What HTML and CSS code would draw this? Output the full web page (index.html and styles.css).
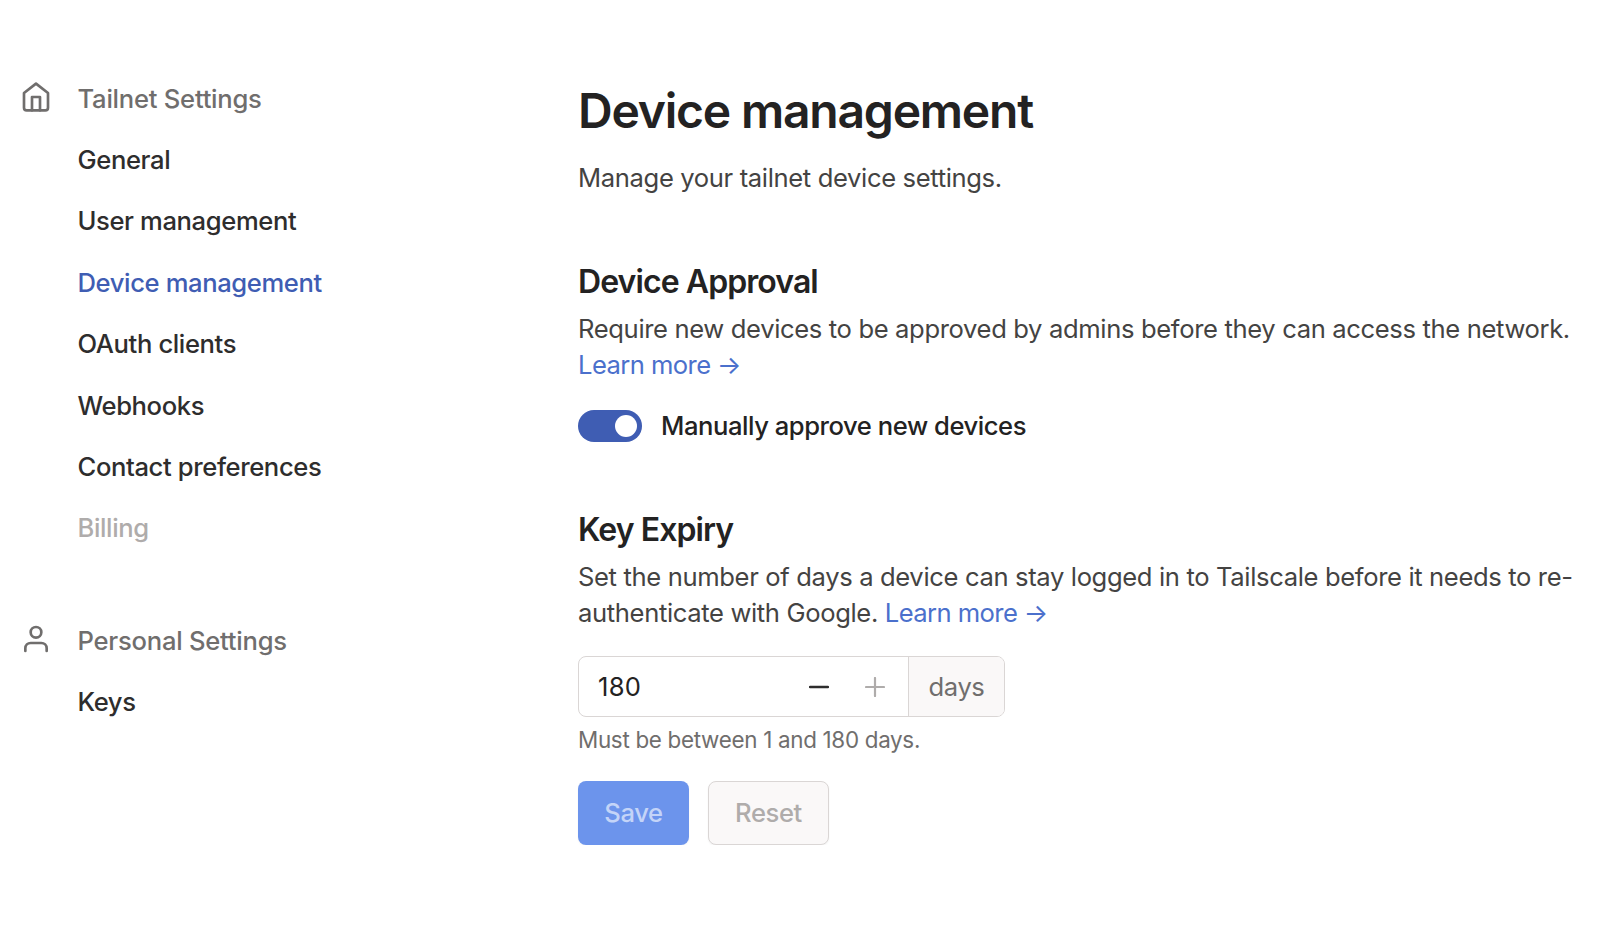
FILE: index.html
```html
<!DOCTYPE html>
<html lang="en">
<head>
    <meta charset="UTF-8">
    <title>Device management</title>
    <link rel="stylesheet" href="styles.css">
</head>
<body>
    <div class="page">
        <nav class="sidebar">
            <div class="nav-group">
                <svg class="nav-icon" viewBox="0 0 24 24">
                    <path d="M3 9l9-7 9 7v11a2 2 0 0 1-2 2H5a2 2 0 0 1-2-2z"/>
                    <path d="M9 22V12h6v10"/>
                </svg>
                <ul>
                    <li class="nav-title">Tailnet Settings</li>
                    <li><a href="#">General</a></li>
                    <li><a href="#">User management</a></li>
                    <li><a href="#" class="active">Device management</a></li>
                    <li><a href="#">OAuth clients</a></li>
                    <li><a href="#">Webhooks</a></li>
                    <li><a href="#">Contact preferences</a></li>
                    <li class="disabled">Billing</li>
                </ul>
            </div>
            <div class="nav-group">
                <svg class="nav-icon" viewBox="0 0 24 24">
                    <path d="M20 21v-2a4 4 0 0 0-4-4H8a4 4 0 0 0-4 4v2"/>
                    <circle cx="12" cy="7" r="4"/>
                </svg>
                <ul>
                    <li class="nav-title">Personal Settings</li>
                    <li><a href="#">Keys</a></li>
                </ul>
            </div>
        </nav>
        <main class="content">
            <h1>Device management</h1>
            <p class="subtitle">Manage your tailnet device settings.</p>

            <section class="approval">
                <h2>Device Approval</h2>
                <p>Require new devices to be approved by admins before they can access the network. <a href="#">Learn more →</a></p>
                <label class="switch-row">
                    <span class="switch"><span class="knob"></span></span>
                    <span>Manually approve new devices</span>
                </label>
            </section>

            <section class="expiry">
                <h2>Key Expiry</h2>
                <p>Set the number of days a device can stay logged in to Tailscale before it needs to re-<wbr>authenticate with Google. <a href="#">Learn more →</a></p>
                <div class="number-field">
                    <span class="value">180</span>
                    <svg class="step" viewBox="0 0 20 20"><path d="M1 10h18"/></svg>
                    <svg class="step step-off" viewBox="0 0 20 20"><path d="M1 10h18M10 1v18"/></svg>
                    <span class="unit">days</span>
                </div>
                <div class="hint">Must be between 1 and 180 days.</div>
                <div class="buttons">
                    <button class="btn save" disabled>Save</button>
                    <button class="btn reset" disabled>Reset</button>
                </div>
            </section>
        </main>
    </div>
</body>
</html>
```
FILE: styles.css
```css
* {
    margin: 0;
    padding: 0;
    box-sizing: border-box;
}
body {
    background: #fff;
    color: #232222;
    font: 25.6px/36px Inter, "Liberation Sans", sans-serif;
}
ul li {
    list-style: none;
}
a {
    text-decoration: none;
}
.page {
    display: flex;
}

/* sidebar */
.sidebar {
    width: 578px;
    padding: 67.6px 0 0 20px;
}
.nav-group {
    display: flex;
    gap: 25.5px;
    margin-bottom: 51px;
}
.nav-icon {
    width: 32px;
    height: 32px;
    margin-top: 13.4px;
    fill: none;
    stroke: #706e6d;
    stroke-width: 2;
    stroke-linecap: round;
    stroke-linejoin: round;
}
.nav-group li {
    height: 61.4px;
    line-height: 61.4px;
    font-weight: 500;
    letter-spacing: -0.38px;
}
.nav-group li a {
    color: #2e2d2d;
}
.nav-group li a.active {
    color: #3f5db3;
}
.nav-group .nav-title {
    color: #706e6d;
    letter-spacing: -0.24px;
}
.nav-group .disabled {
    color: #afacab;
}

/* content */
.content {
    width: 1010px;
    padding-top: 83px;
}
h1 {
    font-size: 48px;
    line-height: 56px;
    font-weight: 600;
    letter-spacing: -1.2px;
}
h2 {
    font-size: 32px;
    line-height: 40px;
    font-weight: 600;
    letter-spacing: -0.92px;
    margin-bottom: 9px;
}
.content p {
    color: #444342;
    letter-spacing: -0.36px;
}
.content p a {
    color: #4b70cc;
    letter-spacing: -0.58px;
}
.content .subtitle {
    margin-top: 21px;
}
.approval {
    margin-top: 66px;
}
.switch-row {
    display: flex;
    align-items: center;
    gap: 19px;
    height: 32px;
    margin-top: 27px;
    font-weight: 500;
    letter-spacing: -0.45px;
}
.switch {
    display: flex;
    justify-content: flex-end;
    align-items: center;
    width: 64px;
    height: 32px;
    padding: 5px;
    border-radius: 16px;
    background: #3f5db3;
}
.knob {
    width: 22px;
    height: 22px;
    border-radius: 50%;
    background: #fff;
}
.expiry {
    margin-top: 68px;
}
.number-field {
    display: flex;
    align-items: center;
    width: 427px;
    height: 61px;
    margin-top: 25px;
    border: 1px solid #dad6d5;
    border-radius: 8px;
    overflow: hidden;
}
.value {
    flex: 1;
    padding-left: 19px;
    letter-spacing: 0.3px;
}
.step {
    width: 20px;
    height: 20px;
    margin-right: 36px;
    fill: none;
    stroke: #2e2d2d;
    stroke-width: 2.4;
    stroke-linecap: round;
}
.step-off {
    margin-right: 23.5px;
    stroke: #afacab;
    stroke-width: 2.2;
}
.unit {
    width: 96px;
    height: 100%;
    line-height: 59px;
    text-align: center;
    color: #706e6d;
    background: #faf8f8;
    border-left: 1px solid #dad6d5;
    letter-spacing: -0.4px;
}
.hint {
    margin-top: 7px;
    font-size: 22.4px;
    line-height: 32px;
    color: #706e6d;
    letter-spacing: -0.3px;
}
.buttons {
    display: flex;
    gap: 19px;
    margin-top: 25px;
}
.btn {
    height: 64px;
    border: 1px solid transparent;
    border-radius: 8px;
    font: inherit;
    font-weight: 500;
    letter-spacing: -0.4px;
    box-shadow: 0 1px 2px rgba(0,0,0,.05);
}
.save {
    width: 111px;
    color: #c4d4f8;
    background: #6c94ec;
}
.reset {
    width: 121px;
    color: #afacab;
    background: #faf8f8;
    border-color: #dad6d5;
}
```
